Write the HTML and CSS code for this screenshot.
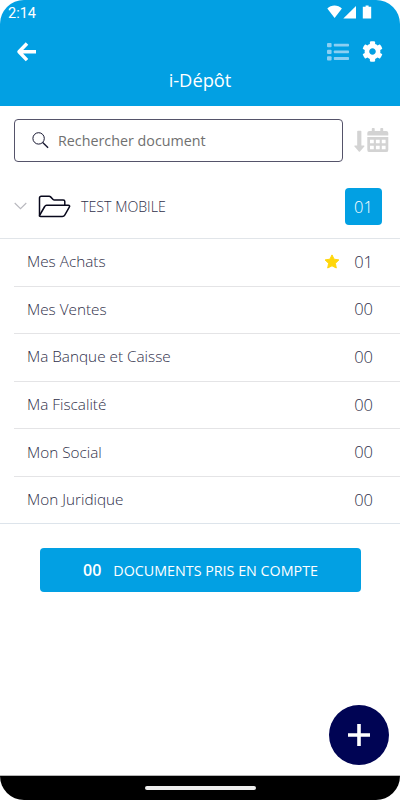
FILE: index.html
```html
<!DOCTYPE html>
<html lang="fr">
<head>
  <meta charset="UTF-8">
  <meta name="viewport" content="width=device-width, initial-scale=1.0">
  <title>i-Dépôt</title>
  <link rel="stylesheet" href="styles.css">
</head>
<body>
  <div class="screen">
    <header class="header">
      <div class="status">
        <span class="time">2:14</span>
        <svg width="46" height="14" viewBox="0 0 46 14" fill="#fff">
          <path d="M0.3 3.6C4-.5 11-.5 14.9 3.6L7.6 13z"/>
          <path d="M29 1v12.5H16.3z"/>
          <path d="M38.6 0.5h3v1.2h2.6v11.8h-8.4V1.7h2.8z"/>
        </svg>
      </div>
      <div class="toolbar">
        <svg class="back" width="20" height="20" viewBox="0 0 20 20" fill="none" stroke="#fff" stroke-width="3.5" stroke-linejoin="round">
          <path d="M11 1.5L3 9.8l8 8.3M3 9.8h17"/>
        </svg>
        <svg class="list" width="22" height="18" viewBox="0 0 22 18" fill="#8ccff2">
          <rect x="0" y="0" width="4.6" height="4.3" rx="1"/>
          <rect x="0" y="6.7" width="4.6" height="4.3" rx="1"/>
          <rect x="0" y="13.3" width="4.6" height="4.3" rx="1"/>
          <rect x="6.8" y="0.7" width="15.2" height="2.8" rx=".7"/>
          <rect x="6.8" y="7.5" width="15.2" height="2.8" rx=".7"/>
          <rect x="6.8" y="14.1" width="15.2" height="2.8" rx=".7"/>
        </svg>
        <svg class="gear" width="21" height="21" viewBox="0 0 512 512" fill="#fff">
          <path d="M487.4 315.7l-42.6-24.6c4.3-23.2 4.3-47 0-70.2l42.6-24.6c4.9-2.8 7.1-8.6 5.5-14-11.1-35.6-30-67.8-54.7-94.6-3.8-4.1-10-5.1-14.8-2.3L380.8 110c-17.9-15.4-38.5-27.3-60.8-35.1V25.8c0-5.6-3.9-10.5-9.4-11.7-36.7-8.2-74.3-7.8-109.2 0-5.5 1.2-9.4 6.1-9.4 11.7V75c-22.2 7.9-42.8 19.8-60.8 35.1L88.7 85.5c-4.9-2.8-11-1.9-14.8 2.3-24.7 26.7-43.6 58.9-54.7 94.6-1.7 5.4.6 11.2 5.5 14L67.3 221c-4.3 23.2-4.3 47 0 70.2l-42.6 24.6c-4.9 2.8-7.1 8.6-5.5 14 11.1 35.6 30 67.8 54.7 94.6 3.8 4.1 10 5.1 14.8 2.3l42.6-24.6c17.9 15.4 38.5 27.3 60.8 35.1v49.2c0 5.6 3.9 10.5 9.4 11.7 36.7 8.2 74.3 7.8 109.2 0 5.5-1.2 9.4-6.1 9.4-11.7v-49.2c22.2-7.9 42.8-19.8 60.8-35.1l42.6 24.6c4.9 2.8 11 1.9 14.8-2.3 24.7-26.7 43.6-58.9 54.7-94.6 1.5-5.5-.7-11.3-5.6-14.1zM256 336c-44.1 0-80-35.9-80-80s35.9-80 80-80 80 35.9 80 80-35.9 80-80 80z"/>
        </svg>
      </div>
      <h1>i-Dépôt</h1>
    </header>

    <div class="search-row">
      <div class="search">
        <svg width="17" height="17" viewBox="0 0 17 17" fill="none" stroke="#15152f">
          <circle cx="6.6" cy="6.4" r="5.7" stroke-width="1"/>
          <path d="M10.7 10.5l5.4 5.3" stroke-width="1.4"/>
        </svg>
        <span>Rechercher document</span>
      </div>
      <svg class="sort" width="35" height="26" viewBox="0 0 35 26" fill="#d3d3d3">
        <path d="M3.2 3.6q0-.8.8-.8h2.6q.8 0 .8.8v13.9h2.5q1 .1.4.9l-4.300 5q-.6.7-1.200 0L.5 18.400q-.6-.8.400-.9h2.300z"/>
        <path fill-rule="evenodd" d="M15.500 2.900h2.300V.8q0-.8.8-.8h1.300q.8 0 .8.8v2.100h5.600V.8q0-.8.8-.8h1.300q.8 0 .8.8v2.100h2.900q2.200 0 2.200 2.200v2.400H13.300V5.100q0-2.200 2.200-2.200zM13.300 9h21v12.900q0 2.200-2.200 2.200H15.500q-2.200 0-2.200-2.200zM16 11.800v3.500h3.800v-3.500zM21.900 11.800v3.500h3.800v-3.500zM27.800 11.800v3.500h3.800v-3.500zM16 17.800v3.500h3.800v-3.500zM21.900 17.800v3.500h3.800v-3.500zM27.800 17.800v3.500h3.800v-3.500z"/>
      </svg>
    </div>

    <div class="folder">
      <svg class="chevron" width="13" height="8" viewBox="0 0 13 8" fill="none" stroke="#b8b8be" stroke-width="1.1">
        <path d="M.7 1l5.800 5.700L12.300 1"/>
      </svg>
      <svg class="folder-icon" width="33" height="23" viewBox="0 0 33 23" fill="none" stroke="#08081c" stroke-width="1.5" stroke-linejoin="round">
        <path d="M1.5 20.5V3Q1.5 1.3 3.2 1.3h8q.8 0 1.4.6l2.500 2.600q.5.5 1.300.5h8.800q1.600 0 1.600 1.600v3.700"/>
        <path d="M1.5 20.5l5.200-9Q7.300 10.300 8.600 10.300h21.600q2.200 0 1.100 1.900l-4.400 7.700q-.9 1.600-2.600 1.600H2.700q-1.600 0-1.200-1z"/>
      </svg>
      <span class="folder-name">TEST MOBILE</span>
      <span class="badge">01</span>
    </div>

    <ul class="list-docs">
      <li>
        <span>Mes Achats</span>
        <svg class="star" width="16" height="15" viewBox="0 0 16 15" fill="#ffd60a" stroke="#ffd60a" stroke-linejoin="round">
          <path d="M8 .9l2.100 4.300 4.800.7-3.500 3.400.9 4.700L8 11.800 3.700 14l.9-4.700L1.100 5.900l4.800-.7z"/>
        </svg>
        <span class="count">01</span>
      </li>
      <li><span>Mes Ventes</span><span class="count">00</span></li>
      <li><span>Ma Banque et Caisse</span><span class="count">00</span></li>
      <li><span>Ma Fiscalité</span><span class="count">00</span></li>
      <li><span>Mon Social</span><span class="count">00</span></li>
      <li><span>Mon Juridique</span><span class="count">00</span></li>
    </ul>

    <button class="submit"><b>00</b><span>DOCUMENTS PRIS EN COMPTE</span></button>

    <button class="fab">
      <svg width="22" height="22" viewBox="0 0 22 22" stroke="#fff" stroke-width="3.6">
        <path d="M11 0v22M0 11h22"/>
      </svg>
    </button>

    <footer class="navbar"><div class="handle"></div></footer>
  </div>
</body>
</html>
```
FILE: styles.css
```css
:root {
  --blue: #02a0e3;
  --navy: #000454;
  --text: #30304a;
}

* {
  box-sizing: border-box;
  margin: 0;
  padding: 0;
}

body {
  background: #fff;
  color: var(--text);
  font-family: "Open Sans", "Noto Sans", sans-serif;
}

svg {
  display: block;
  flex: none;
}

button {
  border: none;
  font-family: inherit;
  color: #fff;
}

.screen {
  position: relative;
  display: flex;
  flex-direction: column;
  width: 400px;
  height: 800px;
  border-radius: 24px;
  overflow: hidden;
}

.header {
  height: 106px;
  background: var(--blue);
  color: #fff;
}

.status {
  display: flex;
  justify-content: space-between;
  height: 26px;
  padding: 5px 27px 0 8px;
}

.time {
  font: 14.5px/17px Roboto, sans-serif;
}

.toolbar {
  display: flex;
  align-items: center;
  height: 51px;
  padding: 0 17px 0 16px;
}

.list {
  margin-left: auto;
}

.gear {
  margin-left: 13px;
}

.header h1 {
  margin-top: -10px;
  font-size: 18.3px;
  line-height: 26px;
  font-weight: 400;
  text-align: center;
}

.search-row {
  display: flex;
  align-items: center;
  height: 43px;
  margin-top: 13px;
  padding: 0 11px 0 14px;
}

.search {
  display: flex;
  flex: none;
  align-items: center;
  gap: 9px;
  width: 329px;
  height: 43px;
  padding-left: 17px;
  border: 1px solid #55536a;
  border-radius: 4px;
  font-size: 14.3px;
  color: #707070;
}

.sort {
  margin-left: 11px;
}

.folder {
  display: flex;
  align-items: center;
  height: 77px;
  padding: 12px 18px 0 14px;
  border-bottom: 1px solid #e1e5e9;
}

.folder-icon {
  margin-left: 11px;
}

.folder-name {
  margin-left: 10px;
  font-size: 14.2px;
  font-weight: 300;
}

.badge {
  width: 37px;
  height: 37px;
  margin-left: auto;
  border-radius: 4px;
  background: var(--blue);
  color: #fff;
  font-size: 16.5px;
  font-weight: 300;
  line-height: 37px;
  text-align: center;
}

.list-docs {
  list-style: none;
  padding-left: 14px;
  border-bottom: 1px solid #dde4eb;
}

.list-docs li {
  display: flex;
  align-items: center;
  height: 47.6px;
  padding: 0 27px 2px 13px;
  border-bottom: 1px solid #e4e4e6;
  font-size: 15.3px;
  font-weight: 300;
}

.list-docs li:last-child {
  height: 46.2px;
  border-bottom: none;
}

.star {
  margin-left: auto;
}

.count {
  margin-left: auto;
  font-size: 16.5px;
}

.star + .count {
  margin-left: 14px;
}

.submit {
  display: flex;
  align-items: center;
  justify-content: center;
  gap: 12px;
  width: 321px;
  height: 44px;
  margin: 24px 0 0 40px;
  border-radius: 4px;
  background: var(--blue);
  font-size: 14.3px;
}

.submit b {
  font-size: 16px;
  font-weight: 600;
}

.fab {
  position: absolute;
  right: 11px;
  bottom: 35px;
  display: flex;
  align-items: center;
  justify-content: center;
  width: 60px;
  height: 60px;
  border-radius: 50%;
  background: var(--navy);
}

.navbar {
  display: flex;
  align-items: center;
  justify-content: center;
  height: 25px;
  margin-top: auto;
  border-top: 1px solid #b5b5b5;
  background: #000;
}

.handle {
  width: 111px;
  height: 4px;
  border-radius: 2px;
  background: #eee;
}
```
